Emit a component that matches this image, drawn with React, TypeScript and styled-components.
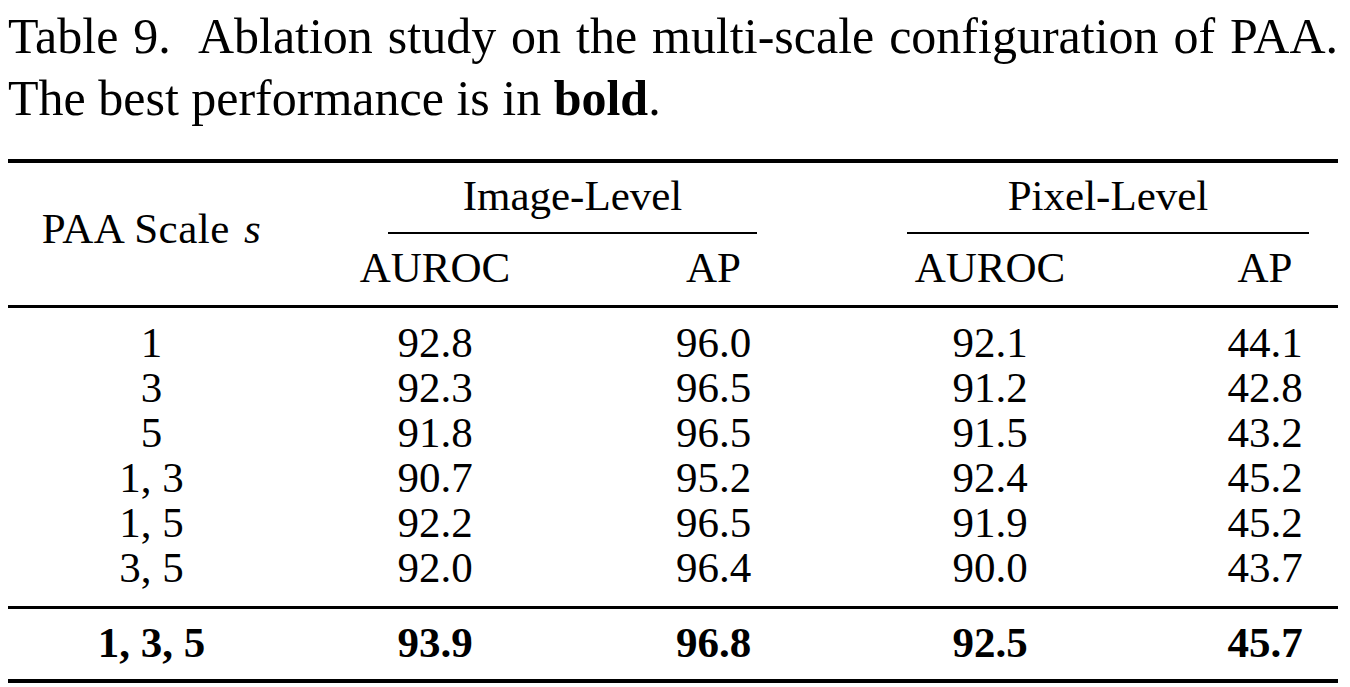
import React from 'react'
import styled, { createGlobalStyle } from 'styled-components'

const GlobalStyle = createGlobalStyle`
  html, body {
    margin: 0;
    padding: 0;
    background: #fff;
  }
  body {
    font-family: 'Liberation Serif', 'Times New Roman', serif;
    color: #000;
  }
`

const Page = styled.div`
  width: 1330px;
  margin-left: 8px;
  padding-top: 5px;
`

const Caption = styled.div`
  font-size: 50px;
  line-height: 62px;
`

const CaptionLine = styled.div<{ $justify?: boolean }>`
  white-space: nowrap;
  text-align: ${(p) => (p.$justify ? 'justify' : 'left')};
  text-align-last: ${(p) => (p.$justify ? 'justify' : 'left')};
`

const Table = styled.div`
  margin-top: 30px;
  border-top: 4px solid #000;
  font-size: 43px;
  line-height: 45px;
`

const COLUMNS = '287px 280px 277px 276px 210px'

const Section = styled.div<{ $rule: number; $top: number; $bottom: number; $bold?: boolean }>`
  display: grid;
  grid-template-columns: ${COLUMNS};
  padding-top: ${(p) => p.$top}px;
  padding-bottom: ${(p) => p.$bottom}px;
  border-bottom: ${(p) => p.$rule}px solid #000;
  font-weight: ${(p) => (p.$bold ? 700 : 400)};
`

const Cell = styled.div<{ $last?: boolean }>`
  text-align: center;
  white-space: nowrap;
  padding-left: ${(p) => (p.$last ? 64 : 0)}px;
`

const StubHead = styled.div`
  grid-row: 1 / span 2;
  align-self: center;
  text-align: center;
  padding-bottom: 6px;
  white-space: nowrap;
  letter-spacing: 0.5px;
`

const Group = styled.div`
  grid-column: span 2;
`

const GroupLabel = styled.div<{ $left: number; $right: number }>`
  margin: 0 ${(p) => p.$right}px 0 ${(p) => p.$left}px;
  padding-bottom: 14px;
  border-bottom: 2px solid #000;
  text-align: center;
  white-space: nowrap;
`

const SubHead = styled(Cell)`
  margin-top: 11px;
`

const Var = styled.i`
  font-style: italic;
  margin-left: 3px;
`

const rows = [
  ['1', '92.8', '96.0', '92.1', '44.1'],
  ['3', '92.3', '96.5', '91.2', '42.8'],
  ['5', '91.8', '96.5', '91.5', '43.2'],
  ['1, 3', '90.7', '95.2', '92.4', '45.2'],
  ['1, 5', '92.2', '96.5', '91.9', '45.2'],
  ['3, 5', '92.0', '96.4', '90.0', '43.7'],
]

const best = ['1, 3, 5', '93.9', '96.8', '92.5', '45.7']

function Row({ values }: { values: string[] }) {
  return (
    <>
      {values.map((v, i) => (
        <Cell key={i} $last={i === values.length - 1}>
          {v}
        </Cell>
      ))}
    </>
  )
}

export default function App() {
  return (
    <>
      <GlobalStyle />
      <Page>
        <Caption>
          <CaptionLine $justify>Table 9.&nbsp; Ablation study on the multi-scale configuration of PAA.</CaptionLine>
          <CaptionLine>
            The best performance is in <b>bold</b>.
          </CaptionLine>
        </Caption>

        <Table>
          <Section $rule={3} $top={10} $bottom={15}>
            <StubHead>
              PAA Scale <Var>s</Var>
            </StubHead>
            <Group>
              <GroupLabel $left={93} $right={95}>Image-Level</GroupLabel>
            </Group>
            <Group>
              <GroupLabel $left={55} $right={29}>Pixel-Level</GroupLabel>
            </Group>
            <SubHead>AUROC</SubHead>
            <SubHead>AP</SubHead>
            <SubHead>AUROC</SubHead>
            <SubHead $last>AP</SubHead>
          </Section>

          <Section $rule={3} $top={12} $bottom={16}>
            {rows.map((r) => (
              <Row key={r[0]} values={r} />
            ))}
          </Section>

          <Section $rule={4} $top={11} $bottom={14} $bold>
            <Row values={best} />
          </Section>
        </Table>
      </Page>
    </>
  )
}
